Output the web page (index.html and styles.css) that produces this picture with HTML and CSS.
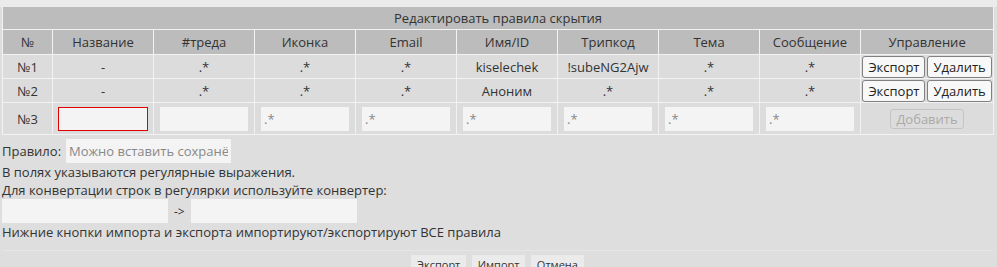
FILE: index.html
```html
<!DOCTYPE html>
<html lang="ru">
<head>
    <meta charset="UTF-8">
    <title>Правила скрытия</title>
    <link rel="stylesheet" href="styles.css">
</head>
<body>
    <div class="top-strip"></div>
    <div class="hide-panel">
        <table class="rules-table">
            <colgroup>
                <col class="col-num">
                <col span="8" class="col-field">
                <col class="col-ctrl">
            </colgroup>
            <thead>
                <tr>
                    <th colspan="10" class="rules-title">Редактировать правила скрытия</th>
                </tr>
                <tr class="rules-head">
                    <th>№</th>
                    <th>Название</th>
                    <th>#треда</th>
                    <th>Иконка</th>
                    <th>Email</th>
                    <th>Имя/ID</th>
                    <th>Трипкод</th>
                    <th>Тема</th>
                    <th>Сообщение</th>
                    <th>Управление</th>
                </tr>
            </thead>
            <tbody>
                <tr>
                    <td>№1</td>
                    <td>-</td>
                    <td>.*</td>
                    <td>.*</td>
                    <td>.*</td>
                    <td>kiselechek</td>
                    <td>!subeNG2Ajw</td>
                    <td>.*</td>
                    <td>.*</td>
                    <td class="ctrl"><button class="btn">Экспорт</button><button class="btn">Удалить</button></td>
                </tr>
                <tr>
                    <td>№2</td>
                    <td>-</td>
                    <td>.*</td>
                    <td>.*</td>
                    <td>.*</td>
                    <td>Аноним</td>
                    <td>.*</td>
                    <td>.*</td>
                    <td>.*</td>
                    <td class="ctrl"><button class="btn">Экспорт</button><button class="btn">Удалить</button></td>
                </tr>
                <tr class="new-row">
                    <td>№3</td>
                    <td><input class="field field-error" type="text"></td>
                    <td><input class="field" type="text"></td>
                    <td><input class="field" type="text" placeholder=".*"></td>
                    <td><input class="field" type="text" placeholder=".*"></td>
                    <td><input class="field" type="text" placeholder=".*"></td>
                    <td><input class="field" type="text" placeholder=".*"></td>
                    <td><input class="field" type="text" placeholder=".*"></td>
                    <td><input class="field" type="text" placeholder=".*"></td>
                    <td><button class="btn btn-add" disabled>Добавить</button></td>
                </tr>
            </tbody>
        </table>

        <div class="rule-line">
            <label for="rule-input">Правило:</label>
            <input id="rule-input" class="field rule-field" type="text" placeholder="Можно вставить сохранённое правило">
        </div>
        <div class="hint">
            В полях указываются регулярные выражения.<br>
            Для конвертации строк в регулярки используйте конвертер:
        </div>
        <div class="converter">
            <input class="field conv-field" type="text">
            <span class="arrow">-&gt;</span>
            <input class="field conv-field" type="text">
        </div>
        <div class="hint">Нижние кнопки импорта и экспорта импортируют/экспортируют ВСЕ правила</div>

        <div class="panel-footer">
            <button class="foot-btn">Экспорт</button>
            <button class="foot-btn">Импорт</button>
            <button class="foot-btn">Отмена</button>
        </div>
    </div>
</body>
</html>
```

FILE: styles.css
```css
body {
    background: #dedede;
    font-family: "Open Sans", Arial, sans-serif;
    font-size: 13px;
    color: #333;
    margin: 0;
    padding: 0;
}
.top-strip {
    height: 7px;
    background: #ebebeb;
}
.hide-panel {
    padding: 0 4px 0 2px;
}
.rules-table {
    width: 991px;
    border-collapse: collapse;
    table-layout: fixed;
}
.col-num {
    width: 50px;
}
.col-field {
    width: 101px;
}
.col-ctrl {
    width: 133px;
}
.rules-table th, .rules-table td {
    border: 1px solid #f2f2f2;
    text-align: center;
    font-weight: normal;
    padding: 0;
    white-space: nowrap;
    overflow: hidden;
}
.rules-title {
    background: #bcbcbc;
    height: 22px;
    border-top: none !important;
}
.rules-head th {
    background: #bcbcbc;
    height: 24px;
}
.rules-table td {
    background: #dcdcdc;
    height: 23px;
}
.new-row td {
    height: 31px;
}
.field {
    box-sizing: border-box;
    width: 88px;
    height: 24px;
    border: none;
    background: #f4f4f4;
    font-family: "Open Sans", Arial, sans-serif;
    font-size: 13px;
    color: #555;
    padding: 0 3px;
    vertical-align: middle;
}
.field::placeholder {
    color: #888;
}
.field-error {
    width: 90px;
    border: 1px solid #e00000;
}
.ctrl {
    font-size: 0;
}
.btn {
    font-family: "Open Sans", Arial, sans-serif;
    font-size: 13px;
    color: #222;
    background: #f8f8f8;
    border: 1px solid #808080;
    border-radius: 3px;
    height: 22px;
    padding: 0 5px;
    margin: 0 1px;
    vertical-align: middle;
}
.btn-add {
    color: #aaa;
    background: #dcdcdc;
    border-color: #c4c4c4;
    height: 20px;
}
.rule-line {
    display: flex;
    align-items: center;
    gap: 5px;
    margin-top: 4px;
}
.rule-field {
    width: 165px;
}
.hint {
    line-height: 18px;
}
.converter {
    display: flex;
    align-items: center;
    gap: 6px;
}
.conv-field {
    width: 166px;
}
.arrow {
    font-size: 12px;
}
.panel-footer {
    margin-top: 9px;
    border-top: 1px solid #e6e6e6;
    padding-top: 4px;
    text-align: center;
}
.foot-btn {
    font-family: "Open Sans", Arial, sans-serif;
    font-size: 11px;
    color: #333;
    background: #ebebeb;
    border: none;
    padding: 2px 6px;
    margin: 0 1px;
}
```
